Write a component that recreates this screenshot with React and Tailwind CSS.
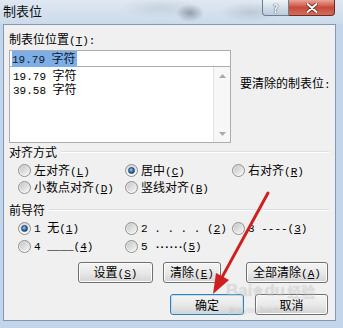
import React from "react";

function A({ children }) {
  return <span className="whitespace-pre font-['Liberation_Mono',monospace] text-[11px]">{children}</span>;
}

function K({ k }) {
  return (
    <A>
      (<span className="underline">{k}</span>)
    </A>
  );
}

function Radio({ checked }) {
  return (
    <span className="flex h-[13px] w-[13px] shrink-0 items-center justify-center rounded-full border border-[#8e8f8f] bg-linear-to-b from-[#d8d8d8] to-[#fbfbfb]">
      {checked ? (
        <span className="h-[7px] w-[7px] rounded-full border border-[#1b416a] bg-[radial-gradient(circle_at_40%_35%,#9ccdf2,#2a68a6_55%,#153e6b)]" />
      ) : (
        <span className="h-[9px] w-[9px] rounded-full bg-linear-to-br from-[#c6c6c6] to-[#f6f6f6]" />
      )}
    </span>
  );
}

function Opt({ checked, children }) {
  return (
    <div className="flex items-center whitespace-nowrap">
      <Radio checked={checked} />
      <span className="ml-[3px] leading-[14px]">{children}</span>
    </div>
  );
}

function Header({ children, className }) {
  return (
    <div className={"ml-[5px] mr-[6px] flex h-[14px] items-center " + className}>
      <span className="leading-[14px]">{children}</span>
      <span className="ml-[4px] h-[2px] flex-1 border-t border-b border-t-[#d5dfe5] border-b-white" />
    </div>
  );
}

function Btn({ className, def, children }) {
  return (
    <div
      className={
        "flex h-[21px] items-center justify-center whitespace-nowrap rounded-[3px] border bg-linear-to-b from-[#f4f4f4] via-[#e9e9e9] to-[#d4d4d4] leading-[14px] " +
        (def
          ? "border-[#3a7db0] shadow-[inset_0_0_0_1px_#b9e2f7] "
          : "border-[#707070] shadow-[inset_0_0_0_1px_#fcfcfc] ") +
        className
      }
    >
      <span>{children}</span>
    </div>
  );
}

export default function App() {
  return (
    <div className="relative h-[328px] w-[343px] overflow-hidden bg-[#c3d5ea] font-['Noto_Sans_CJK_SC',sans-serif] text-[12px] text-black">
      {/* title bar */}
      <div className="flex h-[24px] items-start bg-[radial-gradient(ellipse_14px_9px_at_190px_13px,rgba(70,80,95,0.45),transparent),radial-gradient(ellipse_30px_10px_at_250px_12px,rgba(120,130,145,0.25),transparent),radial-gradient(ellipse_40px_10px_at_160px_8px,rgba(150,160,175,0.25),transparent),linear-gradient(#dfe8f2,#cbdaeb)]">
        <span className="pl-[3px] pt-[3px] text-[13px] leading-[16px] text-[#111]">制表位</span>
        <div className="ml-auto mr-[8px] flex">
          <div className="flex h-[16px] w-[27px] items-center justify-center rounded-bl-[4px] border border-t-0 border-[#6d7e93] bg-linear-to-b from-[#eef3f8] via-[#d3dde9] to-[#bccbdc] text-[11px] font-bold leading-[12px] text-white [text-shadow:0_0_1px_#384a60,0_0_1px_#384a60]">
            ?
          </div>
          <div className="flex h-[16px] w-[46px] items-center justify-center rounded-br-[4px] border border-l-0 border-t-0 border-[#6b2b25] bg-linear-to-b from-[#e8a597] via-[#c74a3b] to-[#d36c59]">
            <svg width="12" height="10" viewBox="0 0 12 10">
              <path d="M1.5 1 L10.5 9 M10.5 1 L1.5 9" stroke="#5a211c" strokeWidth="3.4" strokeLinecap="round" />
              <path d="M1.5 1 L10.5 9 M10.5 1 L1.5 9" stroke="#ffffff" strokeWidth="2" strokeLinecap="round" />
            </svg>
          </div>
        </div>
      </div>

      {/* client panel */}
      <div className="ml-[3px] mr-[7px] h-[297px] border border-[#8399b3] bg-[#f0f0f0]">
        <div className="flex">
          <div className="ml-[5px] pt-[7px]">
            <div className="leading-[14px]">
              制表位位置<K k="T" />
              <A>:</A>
            </div>
            <div className="mt-[2px] flex h-[17px] w-[222px] items-center border border-[#abadb3] bg-white pl-[2px]">
              <span className="inline-block whitespace-nowrap bg-[#7daee6] pr-[1px] leading-[13px] text-[#0d1a2e]">
                <A>19.79 </A>字符
              </span>
            </div>
            <div className="flex h-[76px] w-[222px] border border-t-0 border-[#abadb3] bg-white">
              <div className="flex-1 pl-[3px] pt-[2px]">
                <div className="whitespace-nowrap leading-[12px]">
                  <A>19.79 </A>字符
                </div>
                <div className="whitespace-nowrap leading-[12px]">
                  <A>39.58 </A>字符
                </div>
              </div>
              <div className="flex w-[17px] flex-col justify-between border-l border-[#e3e3e3] bg-[#f7f7f7]">
                <div className="flex h-[17px] items-center justify-center">
                  <svg width="7" height="4" viewBox="0 0 7 4">
                    <path d="M0 4 L3.5 0 L7 4 Z" fill="#a9a9a9" />
                  </svg>
                </div>
                <div className="flex h-[17px] items-center justify-center">
                  <svg width="7" height="4" viewBox="0 0 7 4">
                    <path d="M0 0 L3.5 4 L7 0 Z" fill="#a9a9a9" />
                  </svg>
                </div>
              </div>
            </div>
          </div>
          <div className="ml-[9px] mt-[51px] leading-[14px]">
            要清除的制表位<A>:</A>
          </div>
        </div>

        <Header className="mt-[2px]">对齐方式</Header>
        <div className="ml-[14px] mt-[3px] grid grid-cols-[107px_107px_1fr] grid-rows-[17px_17px] items-center">
          <Opt>
            左对齐<K k="L" />
          </Opt>
          <Opt checked>
            居中<K k="C" />
          </Opt>
          <Opt>
            右对齐<K k="R" />
          </Opt>
          <Opt>
            小数点对齐<K k="D" />
          </Opt>
          <Opt>
            竖线对齐<K k="B" />
          </Opt>
          <div />
        </div>

        <Header className="mt-[7px]">前导符</Header>
        <div className="ml-[14px] mt-[2px] grid grid-cols-[107px_107px_1fr] grid-rows-[18px_18px] items-center">
          <Opt checked>
            <A>1 </A>无<K k="1" />
          </Opt>
          <Opt>
            <A>2 . . . . </A>
            <K k="2" />
          </Opt>
          <Opt>
            <A>3 ----</A>
            <K k="3" />
          </Opt>
          <Opt>
            <A>4 ____</A>
            <K k="4" />
          </Opt>
          <Opt>
            <A>5 </A>
            <span className="font-['Liberation_Mono',monospace] text-[11px] font-bold tracking-[-2px]">······</span>
            <K k="5" />
          </Opt>
          <div />
        </div>

        <div className="ml-[74px] mt-[7px] flex">
          <Btn className="w-[75px]">
            设置<K k="S" />
          </Btn>
          <Btn className="ml-[10px] w-[58px]">
            清除<K k="E" />
          </Btn>
          <Btn className="ml-[25px] w-[82px]">
            全部清除<K k="A" />
          </Btn>
        </div>
        <div className="ml-[166px] mt-[11px] flex">
          <Btn def className="w-[74px]">
            确定
          </Btn>
          <Btn className="ml-[11px] w-[73px]">取消</Btn>
        </div>
      </div>

      {/* watermark */}
      <div className="pointer-events-none absolute left-[226px] top-[282px] flex items-end font-['Liberation_Sans',sans-serif] text-[17px] font-bold leading-[18px] text-white/35 [text-shadow:0_0_1px_rgba(0,0,0,0.18)]">
        <span>Bai</span>
        <span className="mx-[1px] text-[12px]">❀</span>
        <span>du</span>
        <span className="ml-[2px] font-['Noto_Sans_CJK_SC',sans-serif] text-[14px]">经验</span>
      </div>
      <div className="pointer-events-none absolute left-[229px] top-[305px] font-['Liberation_Sans',sans-serif] text-[9px] leading-[10px] text-white/35 [text-shadow:0_0_1px_rgba(0,0,0,0.18)]">
        jingyan.baidu.com
      </div>

      {/* red arrow */}
      <svg className="pointer-events-none absolute left-0 top-0" width="343" height="328" viewBox="0 0 343 328">
        <line x1="268" y1="193" x2="222.5" y2="276.4" stroke="#cf2020" strokeWidth="3" strokeLinecap="round" />
        <polygon points="213,294 229,280 216,273" fill="#cf2020" />
      </svg>
    </div>
  );
}
